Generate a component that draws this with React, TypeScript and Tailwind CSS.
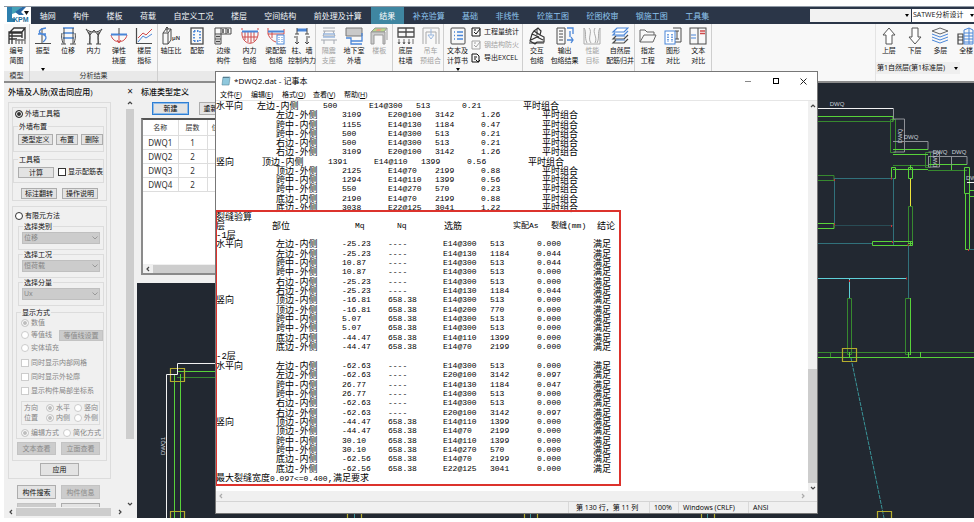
import React from "react";

type IconName = keyof typeof icons;

const K = "#4a4a4a";
const B = "#4a86d8";
const R = "#cf4a4a";

const icons = {
  model: (
    <g stroke="#333" strokeWidth="1.3">
      <path d="M1 6 6 1h11l-3 4H1v12M1 9h13M14 5v6M17 1v11M1 12h8M4 5v12M1 6h13" />
      <path d="M8 12v5M11 12v5M14 12v5M17 12v5M7 13h10" stroke="#777" />
    </g>
  ),
  mode: (
    <g>
      <path d="M8 1v16M1 16.500h16" stroke={K} />
      <path d="M12 1C4 2 4 6 8 7s6 4 1 8M4 7h8" stroke={B} strokeWidth="1.3" />
    </g>
  ),
  disp: (
    <g>
      <path d="M4 1h11M4 6h11M4 11h11" stroke={B} strokeWidth="1.500" />
      <path d="M5 1v16M14 1v16M2 17h5M11 17h6M3 6c-1 4 0 7 1 10M16 6c1 4 0 7-1 10" stroke={K} />
    </g>
  ),
  force: (
    <g stroke={K}>
      <path d="M5 4v13M13 4v13M2 17h5M11 17h5" />
      <path d="M1 2c4 4 12 4 16 0M1 2l4 6 4-5 4 5 4-6M3 5c4 6 0 9 2 12M15 5c-4 6 0 9-2 12" />
    </g>
  ),
  bend: (
    <g>
      <path d="M1 8c2 9 14 9 16 0M9 8v7M7 13l2 3 2-3" stroke={R} />
      <path d="M1 7.500h16" stroke={B} strokeWidth="2" />
      <path d="M9 1v6" stroke={K} />
    </g>
  ),
  chart: (
    <g>
      <path d="M1.500 1v15.500H17" stroke={K} strokeWidth="1.200" />
      <path d="M3 11l5-5 3 2 6-6" stroke={R} />
      <path d="M3 15l5-6 3 2 6-4" stroke={B} />
    </g>
  ),
  axial: (
    <g stroke={K}>
      <path d="M1 6h5v11H1zM1 6l3-4h5L6 6M9 2v11l-3 4M5 0v5M3.500 1.500 5 0l1.500 1.500" />
      <text x="10" y="13" fontSize="6" fill="#444" stroke="none" fontFamily="Liberation Sans" fontWeight="700">μN</text>
    </g>
  ),
  rebar: (
    <g>
      <rect x="3" y="1" width="12" height="16" stroke={K} strokeWidth="1.300" />
      <path d="M6 4v10M12 4v10M6 4h6M6 14h6" stroke={B} strokeDasharray="1.500 1.500" strokeWidth="1.800" />
    </g>
  ),
  edge: (
    <g stroke={K}>
      <path d="M1 1h16v6H7v10H1zM7 1v6H1M12 1v6M1 12h6" />
      <path d="M9 2v4M14 2v4M2 9.500h4M2 14.500h4" strokeWidth="1.500" />
    </g>
  ),
  envelope: (
    <g stroke={R}>
      <path d="M1 5v3c2 11 14 11 16 0V5M4 5v8M7 5v10M10 5v11M13 5v9M2 10h14" />
      <path d="M1 4.500h16" stroke={B} strokeWidth="2" />
      <path d="M1 3V1M17 3V1" stroke={R} />
    </g>
  ),
  beamEnv: (
    <g>
      <path d="M1 1v6c2 5 5 7 8 8M1 7h16V2M5 5v6" stroke={R} />
      <path d="M1 4.500h16" stroke={B} strokeWidth="2" />
      <rect x="10" y="8" width="7" height="9" stroke={B} fill="#fff" />
      <path d="M12 10v5M15 10v5" stroke={B} strokeDasharray="1 1" />
    </g>
  ),
  column: (
    <g>
      <path d="M4 3h10" stroke={B} strokeWidth="3" />
      <path d="M4 1v6M14 1v6M2 7h4M12 7h4M4 11v6M14 11v6M2 15l2 2 2-2M12 15l2 2 2-2M1 10h4M13 10h4" stroke={K} />
    </g>
  ),
  isolate: (
    <g stroke="#a3a8b0">
      <path d="M3 1h12M3 4h12M5 4 3 9h12l-2-5M1 13h16M4 13v4M14 13v4" />
      <path d="M3 10h12M3 7h12" stroke="#9bb8de" strokeWidth="1.500" />
    </g>
  ),
  basement: (
    <g>
      <path d="M1 1h16v8H1z" stroke="#777" fill="#c9c9c9" />
      <path d="M1 11h5v3h11V6M17 17H6v-3" stroke={B} strokeWidth="1.300" />
    </g>
  ),
  slab: (
    <g stroke="#999">
      <path d="M1 5 5 1h12l-3 4z" fill="#b9d88a" />
      <path d="M7 2h5l-2 2H6z" fill="#e9a087" stroke="none" />
      <path d="M1 5v12h3V8h9v9h2V5zM17 1v12" fill="#ccc" />
    </g>
  ),
  bottom: (
    <g stroke={K}>
      <path d="M1 1h16v9H1zM1 5h16M9 1v9" strokeWidth="1.300" />
      <path d="M2 12v5M7 12v5M12 12v5M16 12v5M1 15l1 2 1-2M6 15l1 2 1-2M11 15l1 2 1-2" strokeWidth=".8" />
    </g>
  ),
  crane: (
    <g stroke="#a9a9a9">
      <path d="M1 1h16v16M1 1v16M4 5h10M4 5v12M14 5v12" />
      <path d="M9 2v6M6 8h6l-3 4z" stroke="#9bb8de" />
    </g>
  ),
  doc: (
    <g>
      <rect x="2" y="1" width="14" height="16" rx="1" stroke={K} />
      <path d="M5 5h1M8 5h6M5 8.500h1M8 8.500h6M5 12h1M8 12h6" stroke={B} strokeWidth="1.300" />
    </g>
  ),
  interact: (
    <g stroke="#333">
      <path d="M6 4l4-3 3 3-1 4 4 2v5H9l-2 2-5-3 2-7zM4 7l7 3M6 4l6 4M3 13l6-3 6 3" strokeWidth="1.200" />
      <path d="M1 16h15M9 2v6" />
    </g>
  ),
  output: (
    <g>
      <path d="M1 1h8v16H1zM3 4h4M3 7h4M3 10h4M3 13h4" stroke={K} />
      <path d="M11 1h6v6M11 13h6M15 10l2 3-2 3M14 4v6" stroke={B} strokeWidth="1.300" />
    </g>
  ),
  perf: (
    <g stroke="#aaa">
      <path d="M1 1v16h16V1M1 1c3 4 0 9 3 15M6 1c4 4-2 10 2 15M12 1c-3 5 3 9 0 15M17 1c-3 5 0 9-3 15" />
    </g>
  ),
  merge: (
    <g stroke={B} strokeWidth="1.200">
      <path d="M6 1h11l-4 4H2zM17 4l-4 4H2l2-2" fill="#fff" />
      <path d="M17 8l-4 4H2l3-3M17 12l-4 4H2l3-3" stroke={K} />
      <path d="M5 9h9M5 13h9" />
    </g>
  ),
  folder: <path d="M1 15V3h5l2 2h7v3M1 15l4-7h12l-3 7z" stroke="#666" />,
  drawing: (
    <g>
      <path d="M9 1h8v14H9M13 4v8M11 4h4M11 12h4" stroke={K} />
      <rect x="1" y="4" width="10" height="13" stroke={B} fill="#fff" />
      <path d="M4 7v8M8 7v8" stroke={B} strokeDasharray="1.500 1" strokeWidth="1.500" />
    </g>
  ),
  compare: (
    <g>
      <rect x="1" y="1" width="16" height="16" stroke={K} />
      <path d="M9 1v16" stroke={K} />
      <path d="M2 8h5M2 11h5" stroke={B} />
      <path d="M11 4h5M11 6.500h5" stroke={R} strokeWidth="1.300" />
    </g>
  ),
  up: <path d="M9 1 3 8h3v9h6V8h3z" stroke="#555" fill="#fff" />,
  down: <path d="M9 17 3 10h3V1h6v9h3z" stroke="#555" fill="#fff" />,
  layers: (
    <g stroke="#666">
      <path d="M9 1l8 3-8 3-8-3z" />
      <path d="M1 7l8 3 8-3M1 10l8 3 8-3" stroke={B} />
      <path d="M1 13l8 3 8-3" stroke={B} />
    </g>
  ),
  building: (
    <g>
      <path d="M1 7h5v10H1zM1 10h5M1 13h5" stroke="#444" strokeWidth="1.200" />
      <path d="M7 3l5-2 4 2v14H7zM7 6h9M7 9h9M7 12h9M7 15h9M12 1v16" stroke={B} />
    </g>
  ),
};

function Icon({ name }: { name: IconName }) {
  return (
    <svg viewBox="0 0 18 18" fill="none" className="size-[18px] shrink-0" aria-hidden="true">
      {icons[name]}
    </svg>
  );
}

type ToolDef = { icon: IconName; lines: string[]; off?: boolean; more?: boolean };

function Tool({ icon, lines, off, more }: ToolDef) {
  return (
    <button
      disabled={off}
      className={`flex min-w-0 flex-1 flex-col items-center whitespace-nowrap text-[7px] leading-[10px] ${off ? "text-[#a2a2a2]" : "text-[#111]"}`}
    >
      <Icon name={icon} />
      <span className="mt-px">{lines[0]}</span>
      {lines[1] && <span>{lines[1]}</span>}
      {more && <span className={`border-x-2 border-t-[3px] border-x-transparent border-t-black ${lines[1] ? "mt-[2px]" : "mt-3"}`} />}
    </button>
  );
}

function Group({ tools, width, label, children }: { tools: ToolDef[]; width: string; label?: string; children?: React.ReactNode }) {
  return (
    <div className={`flex shrink-0 flex-col border-r border-[#cfcfcf] ${width}`}>
      <div className="flex h-[47px] pt-[3px]">
        {tools.map((t) => (
          <Tool key={t.lines.join()} {...t} />
        ))}
        {children}
      </div>
      <div className="h-[10px] bg-[#e9e9e9] text-center text-[7px] leading-[10px] text-[#333]">{label}</div>
    </div>
  );
}

const menus = ["轴网", "构件", "楼板", "荷载", "自定义工况", "楼层", "空间结构", "前处理及计算", "结果", "补充验算", "基础", "非线性", "砼施工图", "砼图校审", "钢施工图", "工具集"];

function Logo() {
  return (
    <svg viewBox="0 0 27 17" className="h-[17px] w-[27px] shrink-0 bg-white" aria-label="PKPM">
      <path d="M3 0h5v11l3 1v3H3z" fill="#2d7fae" />
      <path d="M8 0h10l-7 6-3 1z" fill="#45a2b8" />
      <path d="M18 0h4l-5 5 3 3h-5l-4-3z" fill="#2868a5" />
      <text x="9" y="15" fontSize="7" fontWeight="700" fontFamily="Liberation Sans" fill="#1f6f9c">KPM</text>
      <path d="M20 4h5l-2.500 4z" fill="#111" />
    </svg>
  );
}

function TopBar() {
  return (
    <header className="flex h-[18px] shrink-0 border-t border-[#8f99a5] bg-[#2b3648]">
      <Logo />
      <nav className="flex w-[687px] text-[8px] leading-[17px]">
        {menus.map((m, i) => (
          <button
            key={m}
            className={`grow whitespace-nowrap px-2 ${i === 8 ? "bg-[#3f86a1] text-white" : i < 8 ? "text-[#f4f7fa]" : "text-[#8fc6f0]"}`}
          >
            {m}
          </button>
        ))}
      </nav>
      <div className="ml-auto flex gap-px py-[2px] text-[7px]">
        <div className="flex w-[101px] items-center bg-[#f2f2f2]">
          <input aria-label="搜索" className="h-full min-w-0 flex-1 bg-transparent px-1 outline-none" />
          <span className="mr-[2px] border-x-2 border-t-[3px] border-x-transparent border-t-black" />
        </div>
        <div className="flex w-[62px] items-center bg-white">
          <select aria-label="模块" className="h-full min-w-0 flex-1 appearance-none bg-white px-px text-[#111]">
            <option>SATWE分析设计</option>
          </select>
          <span className="border-x-2 border-t-[3px] border-x-transparent border-t-black" />
        </div>
      </div>
    </header>
  );
}

function Ribbon() {
  return (
    <div className="flex h-[59px] shrink-0 border-b-2 border-[#8c8c8c] bg-[#f8f8f8]">
      <Group width="w-[26px]" label="模型" tools={[{ icon: "model", lines: ["编号", "简图"] }]} />
      <Group
        width="w-[128px]"
        label="分析结果"
        tools={[
          { icon: "mode", lines: ["振型"], more: true },
          { icon: "disp", lines: ["位移"] },
          { icon: "force", lines: ["内力"] },
          { icon: "bend", lines: ["弹性", "挠度"] },
          { icon: "chart", lines: ["楼层", "指标"] },
        ]}
      />
      <Group
        width="w-[158px]"
        tools={[
          { icon: "axial", lines: ["轴压比"] },
          { icon: "rebar", lines: ["配筋"] },
          { icon: "edge", lines: ["边缘", "构件"] },
          { icon: "envelope", lines: ["内力", "包络"] },
          { icon: "beamEnv", lines: ["梁配筋", "包络"] },
          { icon: "column", lines: ["柱、墙", "控制内力"] },
        ]}
      />
      <Group
        width="w-[77px]"
        tools={[
          { icon: "isolate", lines: ["隔震", "支座"], off: true },
          { icon: "basement", lines: ["地下室", "外墙"] },
          { icon: "slab", lines: ["楼板"], off: true },
        ]}
      />
      <Group
        width="w-[51px]"
        tools={[
          { icon: "bottom", lines: ["底层", "柱墙"] },
          { icon: "crane", lines: ["吊车", "预组合"], off: true },
        ]}
      />
      <Group width="w-[79px]" tools={[{ icon: "doc", lines: ["文本及", "计算书"], more: true }]}>
        <div className="flex w-[51px] flex-col gap-[3px] whitespace-nowrap text-[7px] leading-[10px]">
          {["工程量统计", "钢结构防火", "导出EXCEL"].map((t, i) => (
            <button key={t} disabled={i === 1} className={`flex items-center gap-[3px] ${i === 1 ? "text-[#a2a2a2]" : "text-[#111]"}`}>
              <svg viewBox="0 0 10 10" className="size-[10px]" fill="none" stroke="currentColor" aria-hidden="true">
                <path d={i === 2 ? "M1 1h5l2 2v6H1zM3 4h3M3 6h2M5 7l2 2 2-2" : "M1 1h8v8H1zM3 5l2 2 4-5M3 3h2"} />
              </svg>
              {t}
            </button>
          ))}
        </div>
      </Group>
      <Group
        width="w-[112px]"
        tools={[
          { icon: "interact", lines: ["交互", "包络"] },
          { icon: "output", lines: ["输出", "包络结果"] },
          { icon: "perf", lines: ["性能", "目标"], off: true },
          { icon: "merge", lines: ["自然层", "配筋归并"] },
        ]}
      />
      <Group
        width="w-[77px]"
        tools={[
          { icon: "folder", lines: ["指定", "工程"] },
          { icon: "drawing", lines: ["图形", "对比"] },
          { icon: "compare", lines: ["文本", "对比"] },
        ]}
      />
      <div className="ml-auto w-[99px] shrink-0 border-l border-[#e4e4e4] pt-[3px]">
        <div className="flex w-[103px]">
          <Tool icon="up" lines={["上层"]} />
          <Tool icon="down" lines={["下层"]} />
          <Tool icon="layers" lines={["多层"]} />
          <Tool icon="building" lines={["全楼"]} />
        </div>
        <div className="mt-[6px] flex h-[12px] w-[84px] items-center bg-[#efefef]">
          <select aria-label="楼层" className="h-full min-w-0 flex-1 appearance-none bg-transparent px-px text-[7px] leading-[12px] text-[#111]">
            <option>第1自然层(第1标准层)</option>
          </select>
          <span className="mr-[2px] border-x-2 border-t-[3px] border-x-transparent border-t-black" />
        </div>
      </div>
    </div>
  );
}

function Btn({ children, w, off, h = "h-[11px]" }: { children: string; w: string; off?: boolean; h?: string }) {
  return (
    <button
      disabled={off}
      className={`flex shrink-0 items-center justify-center whitespace-nowrap border text-[7px] leading-[9px] ${w} ${h} ${off ? "border-[#c3c3c3] bg-[#cccccc] text-[#8a8a8a]" : "border-[#adadad] bg-[#e3e3e3] text-[#111]"}`}
    >
      {children}
    </button>
  );
}

function Choice({ type, label, name, checked, off }: { type: "radio" | "checkbox"; label: string; name?: string; checked?: boolean; off?: boolean }) {
  return (
    <label className={`flex h-[10px] items-center gap-[2px] whitespace-nowrap text-[7px] leading-[10px] ${off ? "text-[#858585]" : "text-[#111]"}`}>
      <input
        type={type}
        name={name}
        defaultChecked={checked}
        disabled={off}
        className={`size-2 shrink-0 appearance-none border bg-white ${type === "radio" ? "rounded-full checked:shadow-[inset_0_0_0_1px_white]" : ""} ${off ? "border-[#cccccc] checked:bg-[#bdbdbd]" : "border-[#333] checked:bg-[#333]"}`}
      />
      {label}
    </label>
  );
}

function Field({ label, value }: { label: string; value: string }) {
  return (
    <fieldset className="ml-[5px] mr-[2px] h-[28px] border border-[#dcdcdc] px-[3px]">
      <legend className="ml-px px-px text-[7px] leading-[9px] text-[#111]">{label}</legend>
      <div className="relative mt-px">
        <select disabled aria-label={label} className="block h-[12px] w-full appearance-none border border-[#bfbfbf] bg-[#cccccc] px-px text-[7px] leading-[10px] text-[#858585]">
          <option>{value}</option>
        </select>
        <svg viewBox="0 0 6 4" className="pointer-events-none absolute right-[2px] top-1 h-1 w-[6px]" fill="none" stroke="#999" aria-hidden="true">
          <path d="M.5.500 3 3l2.500-2.500" />
        </svg>
      </div>
    </fieldset>
  );
}

function Arrow({ dir, pale }: { dir: "up" | "down" | "left" | "right"; pale?: boolean }) {
  const d = { up: "M1 4l2-2 2 2", down: "M1 2l2 2 2-2", left: "M4 1 2 3l2 2", right: "M2 1l2 2-2 2" }[dir];
  return (
    <svg viewBox="0 0 6 6" className="size-[6px] shrink-0" fill="none" stroke={pale ? "#aaa" : "#444"} strokeWidth="1.200" aria-hidden="true">
      <path d={d} />
    </svg>
  );
}

function SidePanel() {
  return (
    <aside className="flex w-[133px] shrink-0 flex-col bg-[#f0f0f0]">
      <div className="flex h-[17px] shrink-0 items-center justify-between pl-1 pr-1 text-[8px] font-medium text-[#111]">
        <span>外墙及人防(双击同应用)</span>
        <span className="text-[10px] font-normal">×</span>
      </div>
      <div className="flex min-h-0 flex-1">
        <div className="min-w-0 flex-1 overflow-hidden pl-1 pt-[2px]">
          <div className="h-[377px] w-[103px] border border-[#dcdcdc] px-[3px] pt-1">
            <section className="h-[94px] border border-[#dcdcdc]">
              <div className="pl-[2px] pt-px">
                <Choice type="radio" name="mode" label="外墙工具箱" checked />
              </div>
              <fieldset className="mr-[2px] mt-[3px] h-[30px] border border-[#dcdcdc] pl-1">
                <legend className="px-px text-[7px] leading-[9px] text-[#111]">外墙布置</legend>
                <div className="mt-[3px] flex gap-[3px]">
                  <Btn w="w-[35px]">类型定义</Btn>
                  <Btn w="w-[22px]">布置</Btn>
                  <Btn w="w-[22px]">删除</Btn>
                </div>
              </fieldset>
              <fieldset className="mr-[2px] mt-[3px] h-[28px] border border-[#dcdcdc] pl-1">
                <legend className="px-px text-[7px] leading-[9px] text-[#111]">工具箱</legend>
                <div className="mt-[3px] flex gap-1">
                  <Btn w="w-[36px]">计算</Btn>
                  <Choice type="checkbox" label="显示配筋表" />
                </div>
              </fieldset>
              <div className="mt-[5px] flex gap-[5px] pl-2">
                <Btn w="w-[36px]">标注翻转</Btn>
                <Btn w="w-[36px]">操作说明</Btn>
              </div>
            </section>
            <section className="mt-[5px] h-[255px] border border-[#dcdcdc]">
              <div className="pl-[2px] pt-[4px]">
                <Choice type="radio" name="mode" label="有限元方法" />
              </div>
              <div className="mt-px">
                <Field label="选择类别" value="位移" />
                <Field label="选择工况" value="恒荷载" />
                <Field label="选择分量" value="Ux" />
              </div>
              <fieldset className="ml-[3px] mr-[2px] mt-[2px] h-[131px] border border-[#dcdcdc] pl-1">
                <legend className="px-px text-[7px] leading-[9px] text-[#111]">显示方式</legend>
                <div className="flex flex-col gap-[2px] pt-px">
                  <Choice type="radio" name="show" label="数值" checked off />
                  <div className="flex justify-between">
                    <Choice type="radio" name="show" label="等值线" off />
                    <Btn w="w-[44px]" off>等值线设置</Btn>
                  </div>
                  <Choice type="radio" name="show" label="实体填充" off />
                </div>
                <div className="mt-[5px] flex flex-col gap-1">
                  <Choice type="checkbox" label="同时显示内部网格" off />
                  <Choice type="checkbox" label="同时显示外轮廓" off />
                  <Choice type="checkbox" label="显示构件局部坐标系" off />
                </div>
                <div className="mr-[3px] mt-[5px] flex h-[24px] flex-col justify-center border border-[#dcdcdc] pl-[2px]">
                  {[["方向", "水平", "竖向"], ["位置", "内侧", "外侧"]].map(([t, a, b]) => (
                    <div key={t} className="flex items-center gap-1 text-[7px] leading-[10px] text-[#858585]">
                      <span className="mr-1 shrink-0">{t}</span>
                      <Choice type="radio" name={t} label={a} checked off />
                      <Choice type="radio" name={t} label={b} off />
                    </div>
                  ))}
                </div>
                <div className="mt-[3px] flex gap-1">
                  <Choice type="radio" name="way" label="编辑方式" checked off />
                  <Choice type="radio" name="way" label="简化方式" off />
                </div>
              </fieldset>
              <div className="mt-[3px] flex gap-[5px] pl-1">
                <Btn w="w-[39px]" h="h-[13px]" off>文本查看</Btn>
                <Btn w="w-[39px]" h="h-[13px]" off>立面查看</Btn>
              </div>
            </section>
            <div className="mt-[2px] flex justify-center">
              <Btn w="w-[39px]" h="h-[13px]">应用</Btn>
            </div>
          </div>
          <div className="mt-[6px] grid grid-cols-[39px_39px] gap-x-[5px] gap-y-1 pl-[9px]">
            <Btn w="w-[39px]" h="h-[14px]">构件搜索</Btn>
            <Btn w="w-[39px]" h="h-[14px]" off>构件信息</Btn>
            <div className="h-[14px] border border-[#c3c3c3] bg-[#cccccc]" />
            <div className="h-[14px] border border-[#adadad] bg-[#e3e3e3]" />
          </div>
        </div>
        <div className="mr-[3px] flex w-2 flex-col items-center justify-between">
          <Arrow dir="up" />
          <div className="mb-auto mt-[3px] h-[330px] w-full bg-[#cdcdcd]" />
          <Arrow dir="down" />
        </div>
      </div>
      <div className="mb-[2px] flex h-[9px] shrink-0 items-center pl-1">
        <Arrow dir="left" />
        <div className="mx-[2px] h-2 w-[95px] bg-[#cdcdcd]" />
        <span className="ml-1"><Arrow dir="right" /></span>
      </div>
    </aside>
  );
}

function TypePanel() {
  return (
    <section className="relative h-[200px] w-[280px] bg-[#f0f0f0] pl-1">
      <h2 className="h-[19px] text-[8px] font-medium leading-[18px] text-[#111]">标准类型定义</h2>
      <div className="flex gap-[10px] pl-[11px]">
        <button className="h-[13px] w-[37px] border border-[#2f7fd4] bg-[#e3e3e3] text-[7px] leading-[10px] shadow-[inset_0_0_0_1px_#8fbbe8]">新建</button>
        <button className="h-[13px] w-[37px] border border-[#adadad] bg-[#e3e3e3] text-[7px] leading-[10px]">重新编号</button>
      </div>
      <div className="mt-[3px] flex h-[157px] flex-col border-2 border-[#8a8a8a] border-t-[#555] bg-white">
        <table className="w-full table-fixed border-collapse border-b border-black text-center text-[8px] leading-[13px] text-[#333]">
          <thead>
            <tr className="h-[15px] border-b border-[#ddd] text-[7px]">
              <th className="w-[35px] border-r border-[#ddd] font-normal">名称</th>
              <th className="w-[29px] border-r border-[#ddd] font-normal">层数</th>
              <th className="pl-1 text-left font-normal">位置</th>
            </tr>
          </thead>
          <tbody className="font-[Noto_Sans]">
            {[["DWQ1", 1], ["DWQ2", 2], ["DWQ3", 2], ["DWQ4", 2]].map(([n, c]) => (
              <tr key={n} className="border-b border-[#ddd]">
                <td className="border-r border-[#ddd]">{n}</td>
                <td className="border-r border-[#ddd]">{c}</td>
                <td />
              </tr>
            ))}
          </tbody>
        </table>
        <div className="mt-auto flex h-[9px] items-center bg-[#f0f0f0] pl-[2px]">
          <Arrow dir="left" />
          <div className="ml-[2px] h-2 flex-1 bg-[#cdcdcd]" />
        </div>
      </div>
    </section>
  );
}

function Model() {
  return (
    <svg viewBox="137 83 837 435" preserveAspectRatio="xMinYMin slice" className="absolute inset-0 size-full" fill="none" aria-label="结构平面图">
      <g stroke="#37892f">
        <path d="M818 121.500h75M893 165.500h35M928 170.500h39M818 352.500h156M177 377.500h40M818 175.500h16v5h-16M830.500 352v5" />
        <path d="M890.500 119.500h5v33h-5zM925.500 152.500h5v15h-5zM905.500 298.500h5v56h-5zM847.500 298.500h4v56h-4zM908.500 206.500h4v37h-4z" />
      </g>
      <g stroke="#58d33a">
        <path d="M818 116.500h75v5M893 149.500h35M893 154.500h35M893 169.500h35M928 164.500h39M818 357.500h156M177 371.500h40M818 223.500h16v5h-16" />
        <path d="M891.500 167.500h4v11h-4zM908.500 167.500h4v11h-4zM872.500 241.500h40v4h-40zM964.500 167.500h5v26h-5zM965.500 193.500h4v56h-4z" />
        <path d="M910.500 298v57M174.500 374v144M180.500 374v144M969 190.500h5M969 196.500h5M920.500 352v5M908.500 352v5M849.500 352v5M908 243.500h5M910.500 241v5M910.500 165v5M951.500 164v6" />
      </g>
      <path d="M834.500 178v47M893.500 178v67M834 178.500h59M818 243.500h54M908.500 245v53M969 249.500h5" stroke="#31717b" />
      <path d="M834 225.500h59" stroke="#294c55" />
      <path d="M818 278.500h89M849.500 278v20" stroke="#5fd0d8" />
      <path d="M851 358l33 160" stroke="#399397" strokeDasharray="4 1" />
      <path d="M354.500 514v4M530.500 514v4M707.500 514v4" stroke="#399397" />
      <path d="M910.500 179v27" stroke="#eee43b" />
      <path d="M842.500 348.500h14v13h-14zM877.500 511.500h14v10h-14zM170.500 368.500h14v13h-14zM170.500 511.500h14v10h-14zM347.500 511v7M361.500 511v7M524.500 511v7M537.500 511v7M701.500 511v7M714.500 511v7" stroke="#b5ad2e" strokeWidth="1.200" />
      <path d="M818 108.500h75M166.500 518V374.500h11v-11H217M967 182.500h7" stroke="#f2f2f2" />
      <path d="M893.500 108v11h11v33h-11M893 141.500h35v8M928 156.500h39v8M928.500 156v11h11v-15h-11M951.500 156v9" stroke="#8e9197" />
      <path d="M834 180h1M834 224.500h1M891 226h1M892 242h1M907.500 245h1M849 281h1M906 278.500h1M968 250h1M891 178.500h1" stroke="#d03030" strokeWidth="2" />
      <g fill="#c9ced8" fontSize="6" fontFamily="Liberation Sans Narrow, Liberation Sans" textAnchor="middle">
        <text x="837" y="106">DWQ</text>
        <text x="911" y="139">DWQ</text>
        <text x="940" y="154">DWQ</text>
        <text x="959" y="154">DWQ</text>
        <text x="966" y="180" textAnchor="start">DWQ</text>
        <text transform="translate(902 136) rotate(-90)">DWQ</text>
        <text transform="translate(937 160) rotate(-90)">DWQ</text>
        <text transform="translate(165 446) rotate(-90)">DWQ1</text>
      </g>
    </svg>
  );
}

type Row = [string, ...string[]];

const upper: Row[] = [
  ["水平向", "左边-内侧", "500", "E14@300", "513", "0.21"],
  ["", "左边-外侧", "3109", "E20@100", "3142", "1.26"],
  ["", "跨中-内侧", "1155", "E14@130", "1184", "0.47"],
  ["", "跨中-外侧", "500", "E14@300", "513", "0.21"],
  ["", "右边-内侧", "500", "E14@300", "513", "0.21"],
  ["", "右边-外侧", "3109", "E20@100", "3142", "1.26"],
  ["竖向", "顶边-内侧", "1391", "E14@110", "1399", "0.56"],
  ["", "顶边-外侧", "2125", "E14@70", "2199", "0.88"],
  ["", "跨中-内侧", "1294", "E14@110", "1399", "0.56"],
  ["", "跨中-外侧", "550", "E14@270", "570", "0.23"],
  ["", "底边-内侧", "2190", "E14@70", "2199", "0.88"],
  ["", "底边-外侧", "3038", "E22@125", "3041", "1.22"],
];

const lower: Row[] = [
  ["-1层"],
  ["水平向", "左边-内侧", "-25.23", "----", "E14@300", "513", "0.000"],
  ["", "左边-外侧", "-25.23", "----", "E14@130", "1184", "0.044"],
  ["", "跨中-内侧", "10.87", "----", "E14@300", "513", "0.044"],
  ["", "跨中-外侧", "10.87", "----", "E14@300", "513", "0.000"],
  ["", "右边-内侧", "-25.23", "----", "E14@300", "513", "0.000"],
  ["", "右边-外侧", "-25.23", "----", "E14@130", "1184", "0.044"],
  ["竖向", "顶边-内侧", "-16.81", "658.38", "E14@300", "513", "0.000"],
  ["", "顶边-外侧", "-16.81", "658.38", "E14@200", "770", "0.000"],
  ["", "跨中-内侧", "5.07", "658.38", "E14@300", "513", "0.000"],
  ["", "跨中-外侧", "5.07", "658.38", "E14@300", "513", "0.000"],
  ["", "底边-内侧", "-44.47", "658.38", "E14@110", "1399", "0.000"],
  ["", "底边-外侧", "-44.47", "658.38", "E14@70", "2199", "0.000"],
  ["-2层"],
  ["水平向", "左边-内侧", "-62.63", "----", "E14@300", "513", "0.000"],
  ["", "左边-外侧", "-62.63", "----", "E20@100", "3142", "0.097"],
  ["", "跨中-内侧", "26.77", "----", "E14@130", "1184", "0.047"],
  ["", "跨中-外侧", "26.77", "----", "E14@300", "513", "0.000"],
  ["", "右边-内侧", "-62.63", "----", "E14@300", "513", "0.000"],
  ["", "右边-外侧", "-62.63", "----", "E20@100", "3142", "0.097"],
  ["竖向", "顶边-内侧", "-44.47", "658.38", "E14@110", "1399", "0.000"],
  ["", "顶边-外侧", "-44.47", "658.38", "E14@70", "2199", "0.000"],
  ["", "跨中-内侧", "30.10", "658.38", "E14@110", "1399", "0.000"],
  ["", "跨中-外侧", "30.10", "658.38", "E14@270", "570", "0.000"],
  ["", "底边-内侧", "-62.56", "658.38", "E14@70", "2199", "0.000"],
  ["", "底边-外侧", "-62.56", "658.38", "E22@125", "3041", "0.000"],
];

const upperWidths = ["w-[60px]", "w-[66px]", "w-[46px]", "w-[47px]", "w-[46px]", "w-[61px]"];
const lowerWidths = ["w-[60px]", "w-[66px]", "w-[46px]", "w-[55px]", "w-[47px]", "w-[47px]", "w-[56px]"];
const headings = [["层", "w-[56px]"], ["部位", "w-[83px]"], ["Mq", "w-[42px]"], ["Nq", "w-[47px]"], ["选筋", "w-[69px]"], ["实配As", "w-[38px]"], ["裂缝(mm)", "w-[46px]"], ["结论", "w-[20px]"]];
const han = "text-[9px] leading-[12px]";
const num = "text-[8px] leading-[10px]";

function DataRow({ row, widths, verdict, tabbed }: { row: Row; widths: string[]; verdict: string; tabbed?: boolean }) {
  const first = tabbed && row[0] === "水平向" ? "w-[41px]" : tabbed && row[0] === "竖向" ? "w-[46px]" : widths[0];
  return (
    <tr className="flex min-h-0 flex-1">
      {row.map((c, i) => (
        <td key={i} className={`shrink-0 ${i === 0 ? first : widths[i]} ${i < 2 ? han : num}`}>
          {c}
        </td>
      ))}
      {row.length > 1 && <td className={han}>{verdict}</td>}
    </tr>
  );
}

function Notepad() {
  return (
    <section className="absolute left-[215px] top-[71px] flex h-[443px] w-[603px] flex-col border border-[#777] bg-white text-black">
      <div className="flex h-[18px] shrink-0 items-center pl-[5px] text-[8px]">
        <svg viewBox="0 0 10 10" className="mr-[3px] size-[10px]" aria-hidden="true">
          <path d="M2 1h7L8 9H1z" fill="#8fc8dd" stroke="#56879b" strokeWidth=".6" />
          <path d="M3 1v1M5 1v1M7 1v1" stroke="#345" />
        </svg>
        <h1>*DWQ2.dat - 记事本</h1>
        <div className="ml-auto flex w-[81px] items-center justify-between pl-[9px] pr-[10px]">
          <button aria-label="最小化" className="h-px w-[6px] bg-[#888]" />
          <button aria-label="最大化" className="size-[6px] border border-black" />
          <button aria-label="关闭" className="size-[7px]">
            <svg viewBox="0 0 7 7" stroke="#222" className="size-[7px]"><path d="M.5.500l6 6M6.500.500l-6 6" /></svg>
          </button>
        </div>
      </div>
      <nav className="flex h-[11px] shrink-0 gap-2 border-b border-[#e6e6e6] pl-1 text-[7px] leading-[10px]">
        {[["文件", "F"], ["编辑", "E"], ["格式", "O"], ["查看", "V"], ["帮助", "H"]].map(([m, k]) => (
          <button key={m} className="w-[23px] whitespace-nowrap text-left">
            {m}(<u>{k}</u>)
          </button>
        ))}
      </nav>
      <div className="flex min-h-0 flex-1">
        <div className="relative min-w-0 flex-1 overflow-hidden whitespace-nowrap font-['Liberation_Mono','Noto_Sans_CJK_SC',monospace]">
          <div className="flex h-[381px] flex-col">
            <table className="block h-[111px] shrink-0">
              <tbody className="flex h-full flex-col">
                {upper.map((r, i) => (
                  <DataRow key={i} row={r} widths={upperWidths} verdict="平时组合" tabbed />
                ))}
              </tbody>
            </table>
            <p className={`h-[9px] shrink-0 ${han}`}>裂缝验算</p>
            <table className="flex min-h-0 flex-1 flex-col">
              <thead className="block h-[9px] shrink-0">
                <tr className="flex">
                  {headings.map(([h, w]) => (
                    <th key={h} className={`shrink-0 text-left font-normal ${w} ${h.length > 2 || h.endsWith("q") ? num : han}`}>{h}</th>
                  ))}
                </tr>
              </thead>
              <tbody className="flex min-h-0 flex-1 flex-col">
                {lower.map((r, i) => (
                  <DataRow key={i} row={r} widths={lowerWidths} verdict="满足" />
                ))}
              </tbody>
            </table>
            <p className={`h-[9px] shrink-0 ${han}`}>最大裂缝宽度<span className="text-[8px]">0.097&lt;=0.400</span>,满足要求</p>
          </div>
          <div className="pointer-events-none absolute -left-px top-[109px] h-[276px] w-[406px] border-2 border-[#dc322c]" />
        </div>
        <div className="flex w-[9px] shrink-0 flex-col items-center bg-[#f0f0f0] pt-[2px]">
          <Arrow dir="up" />
          <div className="mb-[2px] mt-auto h-[114px] w-full bg-[#cdcdcd]" />
          <Arrow dir="down" />
        </div>
      </div>
      <div className="flex h-[10px] shrink-0 items-center justify-between bg-[#f0f0f0] pl-[2px] pr-[11px]">
        <Arrow dir="left" pale />
        <Arrow dir="right" pale />
      </div>
      <footer className="flex h-[12px] shrink-0 items-center justify-end border-t border-[#d4d4d4] bg-[#f0f0f0] text-[7px] leading-[11px]">
        <span className="w-[81px] border-l border-[#d9d9d9] pl-[7px]">第 130 行，第 11 列</span>
        <span className="w-[29px] border-l border-[#d9d9d9] pl-1">100%</span>
        <span className="w-[70px] border-l border-[#d9d9d9] pl-1">Windows (CRLF)</span>
        <span className="w-[69px] border-l border-[#d9d9d9] pl-1">ANSI</span>
      </footer>
    </section>
  );
}

export default function App() {
  return (
    <div className="relative flex h-screen flex-col overflow-hidden bg-white pb-1 pl-1 pt-[6px] font-['Open_Sans','Noto_Sans_CJK_SC',sans-serif]">
      <TopBar />
      <Ribbon />
      <main className="flex min-h-0 flex-1">
        <SidePanel />
        <div className="relative min-w-0 flex-1 overflow-hidden bg-[#222831]">
          <Model />
          <TypePanel />
        </div>
      </main>
      <Notepad />
    </div>
  );
}
